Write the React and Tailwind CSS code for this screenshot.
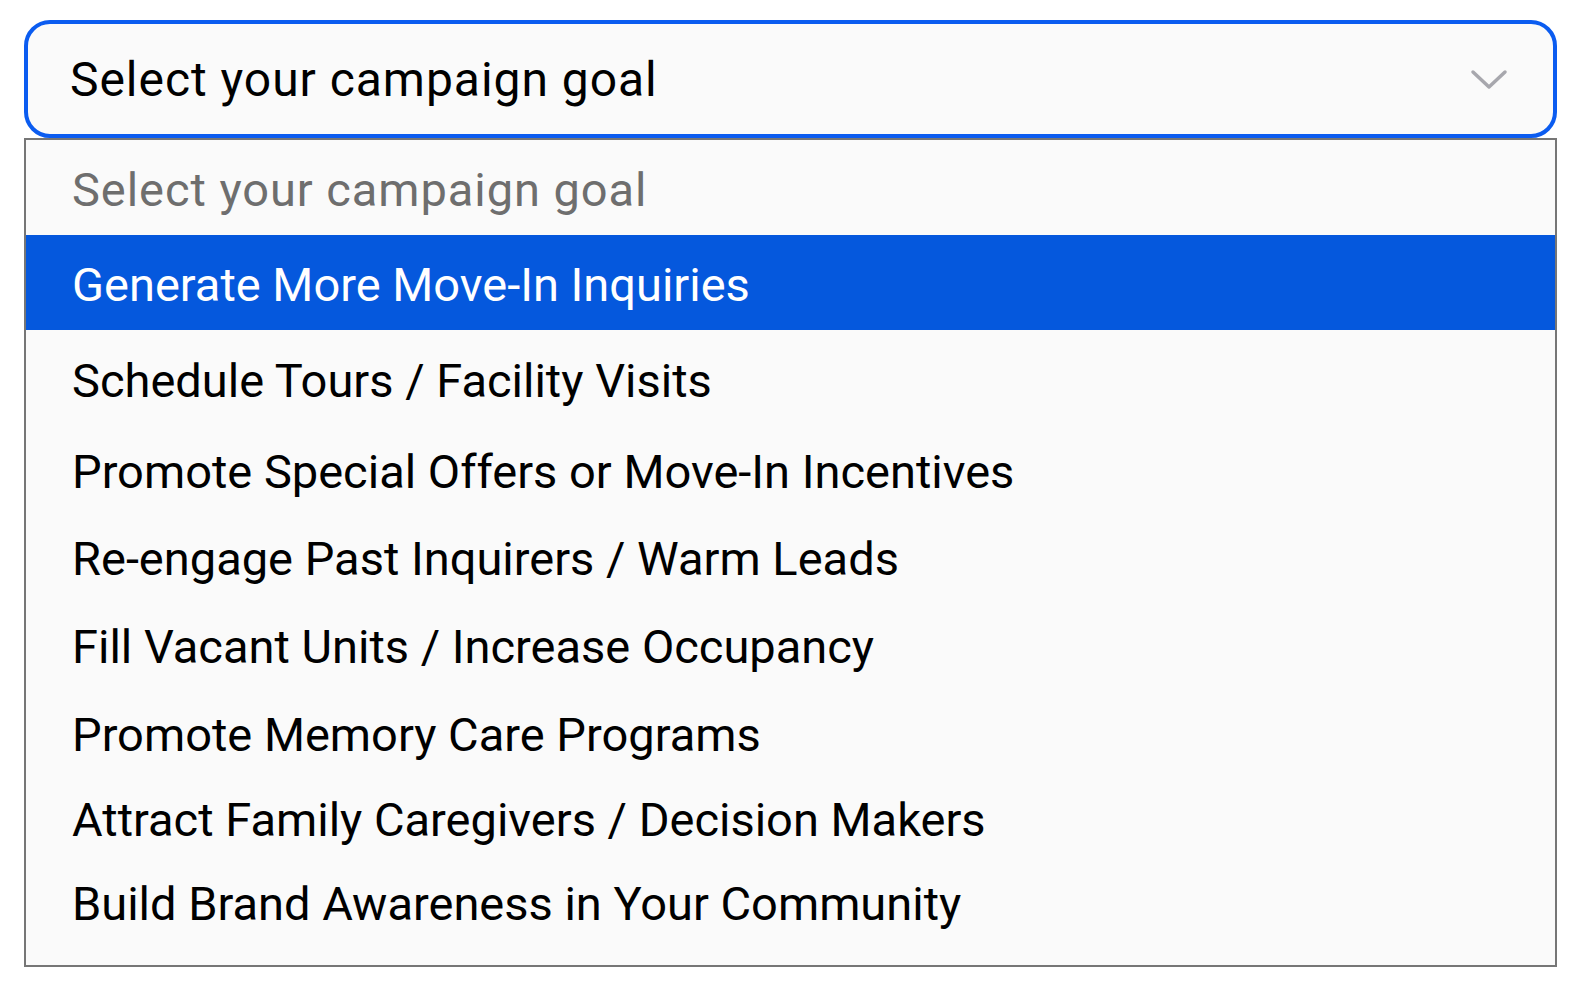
const options = [
  { label: 'Generate More Move-In Inquiries', h: 'h-[95px]', pt: 'pt-[4px]', active: true },
  { label: 'Schedule Tours / Facility Visits', h: 'h-[95px]', pt: 'pt-[6px]' },
  { label: 'Promote Special Offers or Move-In Incentives', h: 'h-[88px]', pt: 'pt-[4px]' },
  { label: 'Re-engage Past Inquirers / Warm Leads', h: 'h-[86px]', pt: 'pt-[4px]' },
  { label: 'Fill Vacant Units / Increase Occupancy', h: 'h-[90px]', pt: 'pt-[4px]' },
  { label: 'Promote Memory Care Programs', h: 'h-[86px]', pt: 'pt-[4px]' },
  { label: 'Attract Family Caregivers / Decision Makers', h: 'h-[84px]', pt: 'pt-[4px]' },
  { label: 'Build Brand Awareness in Your Community', h: 'h-[84px]', pt: 'pt-[4px]' },
];

export default function App() {
  return (
    <div
      className="bg-white pt-[20px] pl-[24px] pb-[30px]"
      style={{ fontFamily: 'Roboto, "Noto Sans", sans-serif' }}
    >
      <div className="w-[1533px]">
        <div className="flex h-[118px] items-center justify-between rounded-[26px] border-[4px] border-[#0b5cf0] bg-[#fafafa] pl-[42px] pr-[45px]">
          <span className="pt-[2px] text-[48px] leading-none tracking-[0.02em] text-black">Select your campaign goal</span>
          <svg width="38" height="22" viewBox="0 0 38 22" fill="none" className="mt-[2px]">
            <path d="M3 3 L19 18 L35 3" stroke="#a7a7ad" strokeWidth="3.5" strokeLinecap="round" strokeLinejoin="round" />
          </svg>
        </div>
        <div className="border-2 border-t-0 border-[#767676] bg-[#fafafa] pb-[22px]">
          <div className="flex h-[97px] items-center border-t-2 border-[#767676] pl-[46px]">
            <span className="pt-[4px] text-[47px] leading-none tracking-[0.02em] text-[#6e6e6e]">Select your campaign goal</span>
          </div>
          {options.map((o) => (
            <div
              key={o.label}
              className={
                o.active
                  ? `flex ${o.h} items-center bg-[#0558dd] pl-[46px]`
                  : `flex ${o.h} items-center pl-[46px]`
              }
            >
              <span
                className={
                  o.active
                    ? `${o.pt} text-[47px] leading-none text-white`
                    : `${o.pt} text-[47px] leading-none text-black`
                }
              >
                {o.label}
              </span>
            </div>
          ))}
        </div>
      </div>
    </div>
  );
}
